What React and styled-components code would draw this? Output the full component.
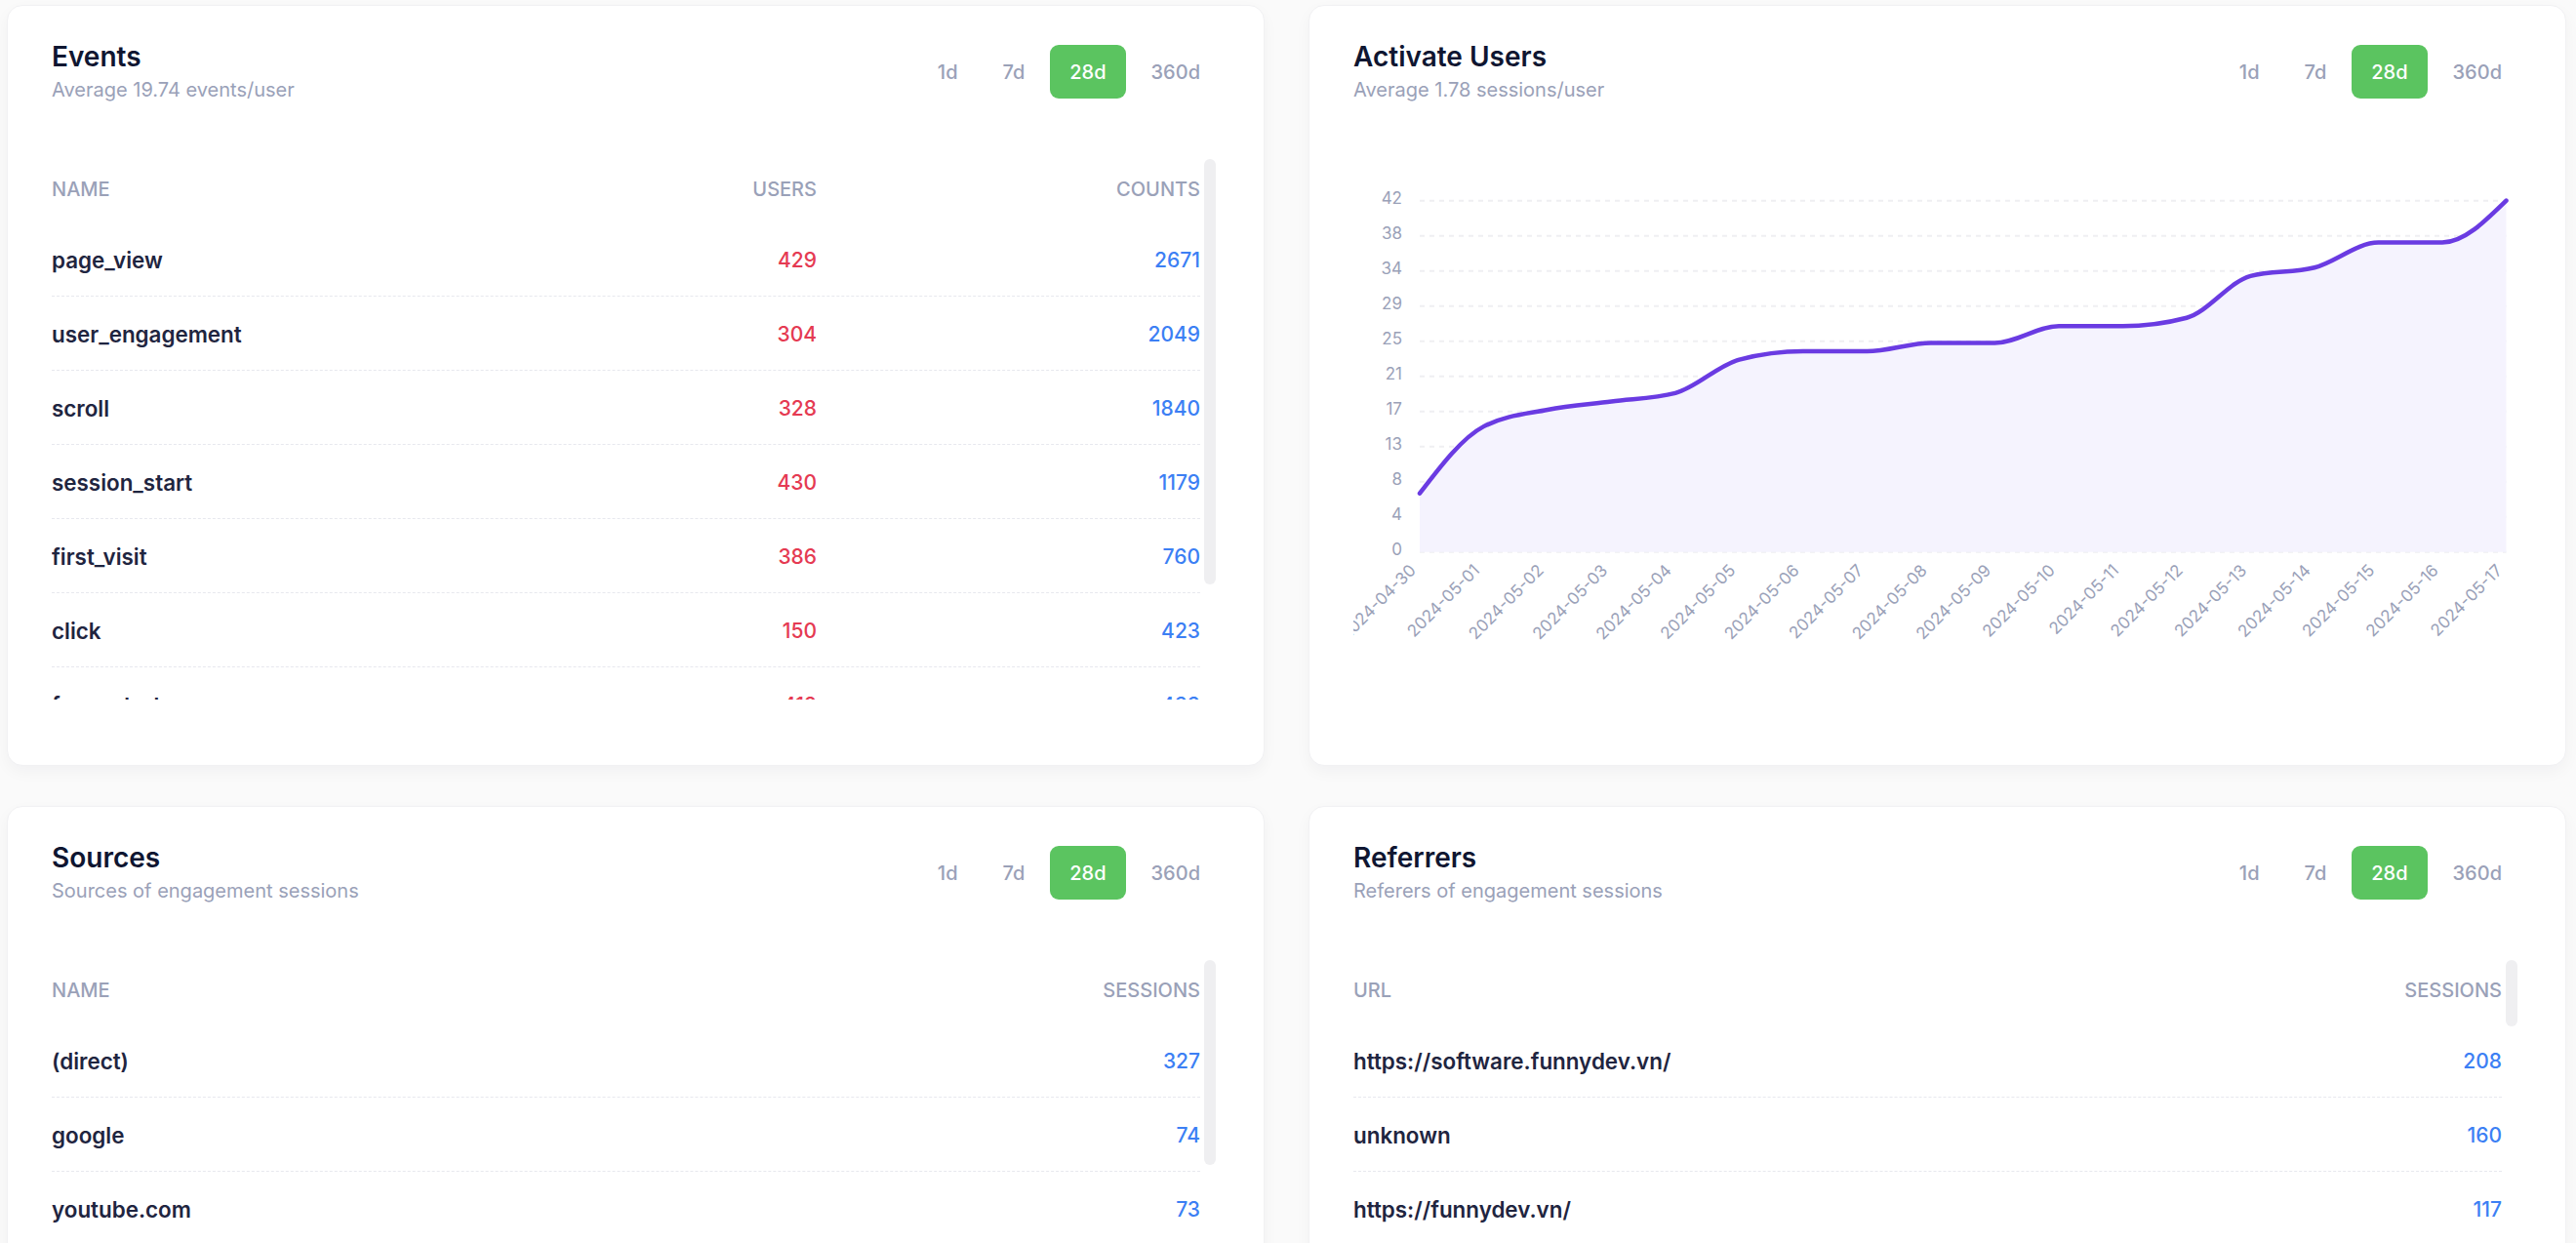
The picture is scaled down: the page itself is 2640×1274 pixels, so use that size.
import React from "react";
import styled, { createGlobalStyle } from "styled-components";

const GlobalStyle = createGlobalStyle`
  body {
    margin: 0;
    background: #fafafa;
    font-family: Inter, "Noto Sans", sans-serif;
  }
`;

const periods = ["1d", "7d", "28d", "360d"];

const events = [
  ["page_view", 429, 2671],
  ["user_engagement", 304, 2049],
  ["scroll", 328, 1840],
  ["session_start", 430, 1179],
  ["first_visit", 386, 760],
  ["click", 150, 423],
  ["form_start", 412, 433],
  ["form_submit", 98, 104],
];

const sources = [
  ["(direct)", 327],
  ["google", 74],
  ["youtube.com", 73],
  ["facebook.com", 52],
  ["bing", 31],
  ["m.facebook.com", 25],
  ["l.facebook.com", 18],
  ["duckduckgo", 12],
];

const referrers = [
  ["https://software.funnydev.vn/", 208],
  ["unknown", 160],
  ["https://funnydev.vn/", 117],
  ["https://www.google.com/", 64],
  ["https://www.youtube.com/", 58],
  ["https://m.facebook.com/", 31],
  ["https://l.facebook.com/", 22],
  ["https://github.com/", 14],
];

const activeUsers = [7, 15, 17, 18, 19, 23, 24, 24, 25, 25, 27, 27, 28, 33, 34, 37, 37, 42];
const days = activeUsers.map((_, i) => {
  const d = new Date(Date.UTC(2024, 3, 30 + i));
  return d.toISOString().slice(0, 10);
});

// table metrics, used to size the scroll thumb
const VIEW_H = 554;
const HEAD_H = 65;
const ROW_H = 76;
const TAIL = 31;

// chart geometry (svg coordinates)
const CW = 1197;
const CH = 554;
const X0 = 68;
const STEP = 65.5;
const TOP = 42.7;
const BASE = 402.7;
const MAX = 42;
const yOf = (v) => BASE - (v / MAX) * (BASE - TOP);

// same maths as d3 curveMonotoneX
function monotonePath(pts) {
  const n = pts.length;
  const sign = (v) => (v < 0 ? -1 : 1);
  const m = new Array(n).fill(0);
  for (let i = 1; i < n - 1; i++) {
    const [x0, y0] = pts[i - 1];
    const [x1, y1] = pts[i];
    const [x2, y2] = pts[i + 1];
    const h0 = x1 - x0;
    const h1 = x2 - x1;
    const s0 = (y1 - y0) / h0;
    const s1 = (y2 - y1) / h1;
    const p = (s0 * h1 + s1 * h0) / (h0 + h1);
    m[i] = (sign(s0) + sign(s1)) * Math.min(Math.abs(s0), Math.abs(s1), 0.5 * Math.abs(p)) || 0;
  }
  const s01 = (pts[1][1] - pts[0][1]) / (pts[1][0] - pts[0][0]);
  m[0] = (3 * s01 - m[1]) / 2;
  const sn = (pts[n - 1][1] - pts[n - 2][1]) / (pts[n - 1][0] - pts[n - 2][0]);
  m[n - 1] = (3 * sn - m[n - 2]) / 2;
  let d = `M${pts[0][0]},${pts[0][1]}`;
  for (let i = 1; i < n; i++) {
    const [x0, y0] = pts[i - 1];
    const [x1, y1] = pts[i];
    const dx = (x1 - x0) / 3;
    d += `C${x0 + dx},${y0 + dx * m[i - 1]},${x1 - dx},${y1 - dx * m[i]},${x1},${y1}`;
  }
  return d;
}

const Periods = ({ value }) => (
  <PeriodGroup>
    {periods.map((p) => (
      <PeriodButton key={p} $active={p === value}>
        {p}
      </PeriodButton>
    ))}
  </PeriodGroup>
);

const CardHead = ({ title, subtitle }) => (
  <Header>
    <div>
      <Title>{title}</Title>
      <Subtitle>{subtitle}</Subtitle>
    </div>
    <Periods value="28d" />
  </Header>
);

const DataTable = ({ columns, cols, rows, total }) => {
  const content = HEAD_H + (total || rows.length) * ROW_H + TAIL;
  const thumb = Math.min(VIEW_H, (VIEW_H * VIEW_H) / content);
  return (
    <Scroller>
      <Viewport>
        <HeadRow $cols={cols}>
          {columns.map((c, i) => (
            <HeadCell key={c} $right={i > 0}>
              {c}
            </HeadCell>
          ))}
        </HeadRow>
        {rows.map((r) => (
          <Row key={r[0]} $cols={cols}>
            <Name>{r[0]}</Name>
            {r.slice(1).map((v, i) => (
              <Value key={i} $tone={r.length > 2 && i === 0 ? "red" : "blue"}>
                {v}
              </Value>
            ))}
          </Row>
        ))}
      </Viewport>
      <Track>
        <Thumb style={{ height: thumb }} />
      </Track>
    </Scroller>
  );
};

const ActiveChart = () => {
  const pts = activeUsers.map((v, i) => [X0 + i * STEP, yOf(v)]);
  const line = monotonePath(pts);
  const last = pts[pts.length - 1][0];
  const area = `${line}L${last},${BASE}L${X0},${BASE}Z`;
  return (
    <ChartSvg width={CW} height={CH} viewBox={`0 0 ${CW} ${CH}`}>
      {Array.from({ length: 11 }, (_, i) => {
        const y = BASE - i * 36;
        return (
          <g key={i}>
            <line x1={X0} x2={last} y1={y} y2={y} stroke="#efeff2" strokeWidth="2" strokeDasharray="5 5" />
            <text x={50} y={y + 3} textAnchor="end">
              {Math.round(4.2 * i)}
            </text>
          </g>
        );
      })}
      <path d={area} fill="#f5f3fe" />
      <path d={line} fill="none" stroke="#6a3be2" strokeWidth="4.5" strokeLinecap="round" />
      {days.map((d, i) => {
        const x = X0 + i * STEP;
        return (
          <text key={d} textAnchor="end" transform={`translate(${x - 3},${BASE + 20}) rotate(-45)`}>
            {d}
          </text>
        );
      })}
    </ChartSvg>
  );
};

export default function App() {
  return (
    <>
      <GlobalStyle />
      <Page>
        <Card>
          <CardHead title="Events" subtitle="Average 19.74 events/user" />
          <DataTable columns={["Name", "Users", "Counts"]} cols="1fr 200px 393px" rows={events} />
        </Card>
        <Card>
          <CardHead title="Activate Users" subtitle="Average 1.78 sessions/user" />
          <ActiveChart />
        </Card>
        <Card>
          <CardHead title="Sources" subtitle="Sources of engagement sessions" />
          <DataTable columns={["Name", "Sessions"]} cols="1fr auto" rows={sources} total={18} />
        </Card>
        <Card>
          <CardHead title="Referrers" subtitle="Referers of engagement sessions" />
          <DataTable columns={["URL", "Sessions"]} cols="1fr auto" rows={referrers} total={58} />
        </Card>
      </Page>
    </>
  );
}

const Page = styled.div`
  display: grid;
  grid-template-columns: 1fr 1fr;
  column-gap: 45px;
  row-gap: 41px;
  padding: 5px 10px 40px 7px;
`;

const Card = styled.div`
  box-sizing: border-box;
  height: 780px;
  padding: 35px 45px;
  background: #fff;
  border: 1px solid #f1f1f3;
  border-radius: 16px;
  box-shadow: 0 6px 16px rgba(20, 20, 40, 0.04);
  overflow: hidden;
`;

const Header = styled.div`
  display: flex;
  justify-content: space-between;
  align-items: center;
`;

const Title = styled.div`
  font-size: 28px;
  line-height: 34px;
  font-weight: 600;
  color: #0f1631;
`;

const Subtitle = styled.div`
  margin-top: 3px;
  font-size: 20px;
  line-height: 28px;
  color: #9aa1b8;
`;

const PeriodGroup = styled.div`
  display: flex;
  gap: 6px;
`;

const PeriodButton = styled.button`
  height: 55px;
  padding: 0 20px;
  border: none;
  border-radius: 9px;
  font-family: inherit;
  font-size: 20px;
  font-weight: 500;
  background: ${(p) => (p.$active ? "#5bc460" : "transparent")};
  color: ${(p) => (p.$active ? "#fff" : "#9aa1b8")};
  cursor: pointer;
`;

const Scroller = styled.div`
  display: flex;
  gap: 4px;
  margin-top: 57px;
  margin-right: 4px;
  height: ${VIEW_H}px;
`;

const Viewport = styled.div`
  flex: 1;
  min-width: 0;
  overflow: hidden;
`;

const Track = styled.div`
  flex: none;
  width: 12px;
`;

const Thumb = styled.div`
  width: 12px;
  border-radius: 6px;
  background: #efeff1;
`;

const HeadRow = styled.div`
  box-sizing: border-box;
  display: grid;
  grid-template-columns: ${(p) => p.$cols};
  align-items: center;
  height: ${HEAD_H}px;
  padding-bottom: 4px;
`;

const HeadCell = styled.div`
  text-align: ${(p) => (p.$right ? "right" : "left")};
  font-size: 20px;
  font-weight: 500;
  text-transform: uppercase;
  color: #9aa1b8;
`;

const Row = styled.div`
  box-sizing: border-box;
  display: grid;
  grid-template-columns: ${(p) => p.$cols};
  align-items: center;
  height: ${ROW_H}px;
  padding-top: 2px;
  border-bottom: 1px dashed #e7e8ee;
`;

const Name = styled.div`
  font-size: 22.4px;
  font-weight: 600;
  color: #1f2540;
`;

const Value = styled.div`
  text-align: right;
  font-size: 21px;
  font-weight: 500;
  color: ${(p) => (p.$tone === "red" ? "#e53a52" : "#3c7ff4")};
`;

const ChartSvg = styled.svg`
  display: block;
  margin-top: 57px;

  text {
    font-family: Inter, "Noto Sans", sans-serif;
    font-size: 17px;
    fill: #9aa1b8;
  }
`;
